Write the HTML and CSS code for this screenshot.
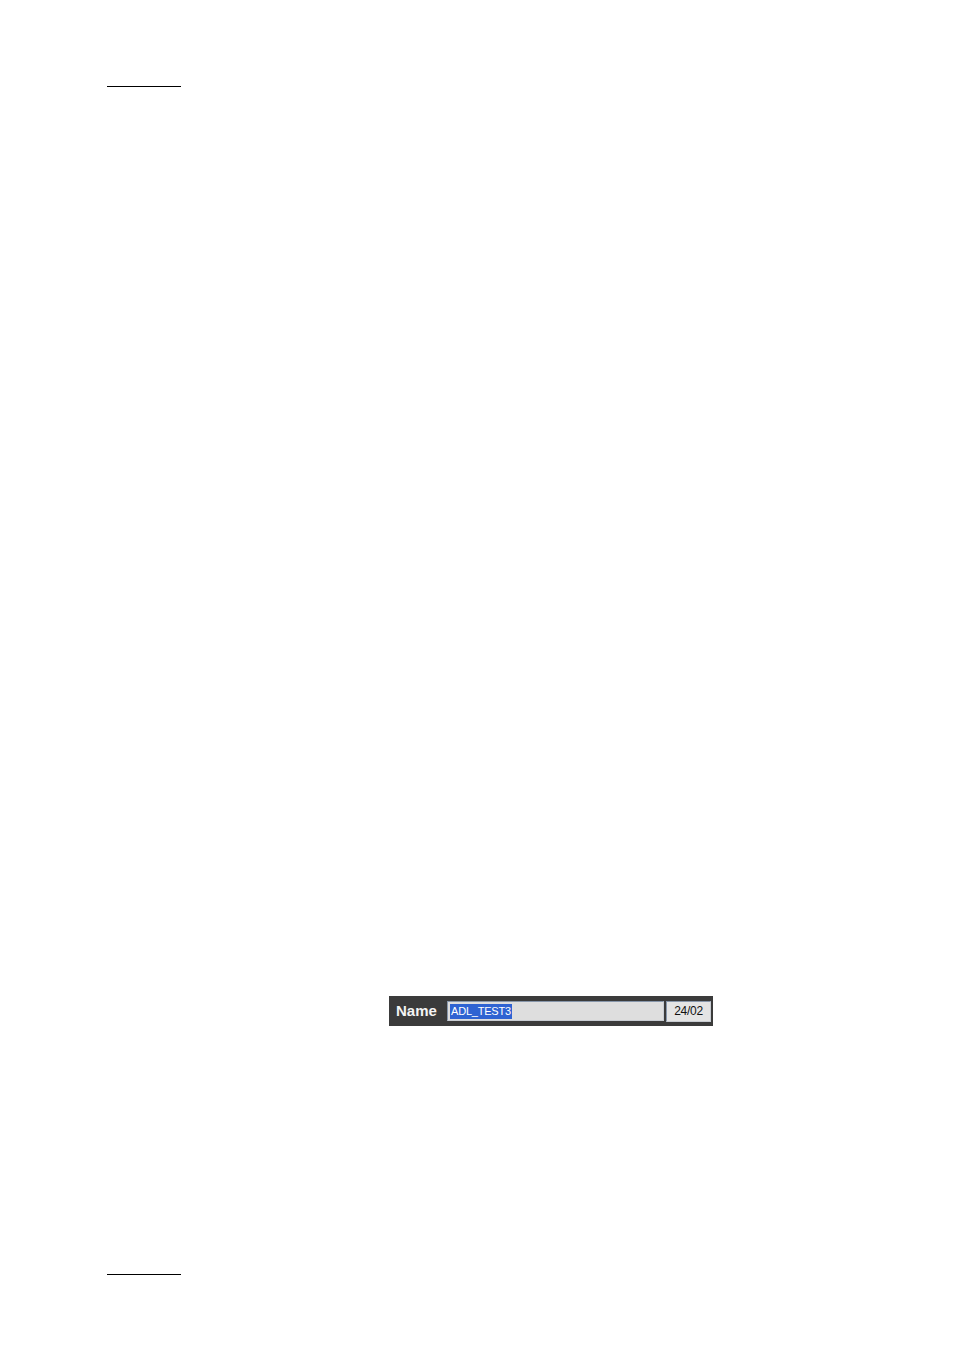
FILE: index.html
```html
<!DOCTYPE html>
<html>
<head>
<meta charset="utf-8">
<link rel="stylesheet" href="styles.css">
</head>
<body>
<div class="page">
  <div class="rule rule-top"></div>
  <div class="content">
    <div class="namebar">
      <span class="label">Name</span>
      <div class="field"><span class="sel">ADL_TEST3</span></div>
      <div class="counter">24/02</div>
    </div>
  </div>
  <div class="rule rule-bottom"></div>
</div>
</body>
</html>
```
FILE: styles.css
```css
html, body {
  margin: 0;
  padding: 0;
  background: #ffffff;
  font-family: "Liberation Sans", Arial, sans-serif;
}
.page {
  width: 954px;
  height: 1350px;
  padding-left: 107px;
  box-sizing: border-box;
  display: flex;
  flex-direction: column;
}
.rule {
  width: 74px;
  height: 1px;
  background: #000000;
}
.rule-top {
  margin-top: 86px;
}
.content {
  height: 1187px;
  display: flex;
  flex-direction: column;
  justify-content: flex-start;
}
.namebar {
  margin-top: 909px;
  margin-left: 282px;
  width: 324px;
  height: 30px;
  box-sizing: border-box;
  background: #3b3b3b;
  display: flex;
  align-items: center;
  padding-left: 7px;
  padding-right: 2px;
}
.label {
  color: #f4f4f4;
  font-size: 15px;
  font-weight: bold;
  width: 51px;
  line-height: 1;
  margin-top: -1px;
}
.field {
  width: 217px;
  height: 20px;
  box-sizing: border-box;
  background: #dedede;
  border: 1px solid #8796aa;
  border-right-color: #c8ccd2;
  border-bottom-color: #c8ccd2;
  display: flex;
  align-items: center;
  padding-left: 2px;
}
.sel {
  background: #2f63d2;
  color: #ffffff;
  font-size: 11px;
  letter-spacing: -0.2px;
  line-height: 15px;
  height: 15px;
  padding: 0 1px;
}
.counter {
  margin-left: 2px;
  width: 45px;
  height: 21px;
  box-sizing: border-box;
  background: #e4e4e4;
  border: 1px solid #8796aa;
  border-right-color: #c8ccd2;
  border-bottom-color: #c8ccd2;
  color: #111111;
  font-size: 12px;
  letter-spacing: -0.3px;
  display: flex;
  align-items: center;
  justify-content: center;
}
```
